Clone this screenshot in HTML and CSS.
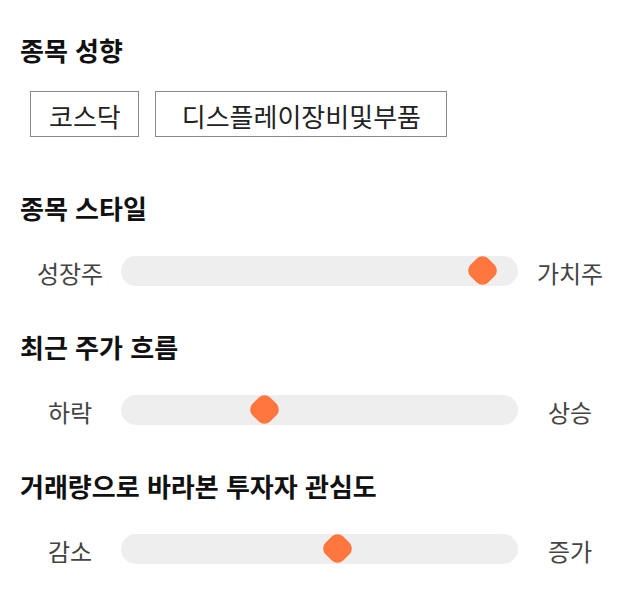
FILE: index.html
```html
<!DOCTYPE html>
<html lang="ko">
<head>
<meta charset="utf-8">
<link rel="stylesheet" href="styles.css">
</head>
<body>
<div class="page">
  <section class="section section-chips">
    <h2 class="title">종목 성향</h2>
    <div class="chips">
      <span class="chip">코스닥</span>
      <span class="chip chip-wide">디스플레이장비및부품</span>
    </div>
  </section>
  <section class="section">
    <h2 class="title">종목 스타일</h2>
    <div class="slider-row">
      <span class="label">성장주</span>
      <div class="track"><span class="thumb" style="--v:0.944"></span></div>
      <span class="label">가치주</span>
    </div>
  </section>
  <section class="section">
    <h2 class="title">최근 주가 흐름</h2>
    <div class="slider-row">
      <span class="label">하락</span>
      <div class="track"><span class="thumb" style="--v:0.35"></span></div>
      <span class="label">상승</span>
    </div>
  </section>
  <section class="section">
    <h2 class="title">거래량으로 바라본 투자자 관심도</h2>
    <div class="slider-row">
      <span class="label">감소</span>
      <div class="track"><span class="thumb" style="--v:0.548"></span></div>
      <span class="label">증가</span>
    </div>
  </section>
</div>
</body>
</html>
```
FILE: styles.css
```css
* { box-sizing: border-box; }
html, body { margin: 0; padding: 0; background: #fff; }
body {
  font-family: "Noto Sans CJK KR", "Noto Sans", sans-serif;
  color: #222;
}
.page {
  width: 640px;
  padding: 34px 20px 0 20px;
  display: flex;
  flex-direction: column;
}
.section { margin-bottom: 45px; }
.section-chips { margin-bottom: 55px; }
.title {
  margin: 0;
  font-size: 26px;
  font-weight: 700;
  line-height: 32px;
  height: 32px;
  color: #111;
}
.section-chips .title { margin-bottom: 25px; }
.section .slider-row { margin-top: 32px; }
.chips {
  display: flex;
  gap: 16px;
  padding-left: 10px;
}
.chip {
  display: flex;
  align-items: center;
  height: 46px;
  padding: 2px 17px 0 18px;
  border: 1px solid #888;
  font-size: 26px;
  color: #222;
}
.chip-wide { padding: 2px 25px 0 26px; }
.slider-row {
  display: flex;
  align-items: center;
  height: 30px;
}
.label {
  width: 100px;
  flex: none;
  text-align: center;
  font-size: 24px;
  color: #444;
  line-height: 30px;
  padding-top: 4px;
}
.track {
  position: relative;
  flex: 1;
  height: 30px;
  margin: 0 2px 0 1px;
  border-radius: 15px;
  background: #eeeeee;
}
.thumb {
  position: absolute;
  top: 0;
  left: calc(var(--v) * (100% - 29px));
  width: 29px;
  height: 29px;
  display: flex;
  align-items: center;
  justify-content: center;
}
.thumb::before {
  content: "";
  flex: none;
  width: 25px;
  height: 25px;
  border-radius: 8px;
  background: #ff763f;
  transform: rotate(45deg);
}
```
